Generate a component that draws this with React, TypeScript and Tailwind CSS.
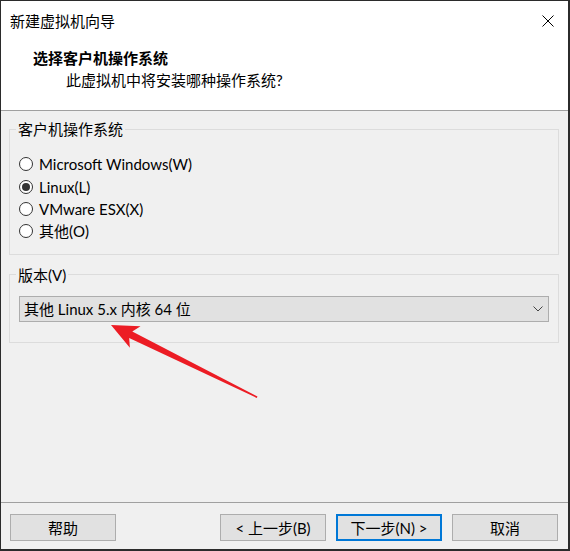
import React from 'react'

const font = "font-['Lato','Noto_Sans_CJK_SC',sans-serif]"

const osOptions = [
  { label: 'Microsoft Windows(W)', checked: false },
  { label: 'Linux(L)', checked: true },
  { label: 'VMware ESX(X)', checked: false },
  { label: '其他(O)', checked: false }
]

const Radio: React.FC<{ checked: boolean }> = ({ checked }) => (
  <span className="w-[14px] h-[14px] rounded-full border border-[#333333] bg-white flex items-center justify-center shrink-0">
    {checked && <span className="w-[8px] h-[8px] rounded-full bg-[#333333]" />}
  </span>
)

const Button: React.FC<{ label: string; primary?: boolean }> = ({ label, primary }) => (
  <div
    className={
      primary
        ? 'w-[106px] h-[27px] bg-[#e1e1e1] border-2 border-[#0078d7] flex items-center justify-center text-[15px] leading-[20px]'
        : 'w-[106px] h-[27px] bg-[#e1e1e1] border border-[#adadad] flex items-center justify-center text-[15px] leading-[20px]'
    }
  >
    {label}
  </div>
)

const App: React.FC = () => {
  return (
    <div className={`${font} relative w-[570px] h-[551px] bg-[#f0f0f0] text-black border-l border-t border-r-2 border-b-2 border-[#2b2b2b] flex flex-col`}>
      {/* title + header */}
      <div className="bg-white h-[109px] shrink-0">
        <div className="h-[39px] flex items-center justify-between pl-[9px] pr-[14px]">
          <span className="text-[15px] leading-[20px]">新建虚拟机向导</span>
          <svg width="12" height="12" viewBox="0 0 12 12">
            <path d="M0.5 0.5L11.5 11.5M11.5 0.5L0.5 11.5" stroke="#000" strokeWidth="1" />
          </svg>
        </div>
        <div className="pt-[7px] pl-[32px]">
          <div className="text-[15px] leading-[22px] font-bold">选择客户机操作系统</div>
          <div className="text-[15px] leading-[22px] pl-[33px]">此虚拟机中将安装哪种操作系统?</div>
        </div>
      </div>
      <div className="h-px bg-[#a0a0a0] shrink-0" />

      {/* body */}
      <div className="flex-1 px-[8px] pr-[9px]">
        <fieldset className="mt-[8px] border border-[#dcdcdc] pb-[10px]">
          <legend className="ml-[6px] px-[2px] text-[15px] leading-[20px]">客户机操作系统</legend>
          <div className="pt-[14px] pl-[9px] pb-[1px] flex flex-col">
            {osOptions.map((opt) => (
              <div key={opt.label} className="h-[22.4px] flex items-center gap-[6px]">
                <Radio checked={opt.checked} />
                <span className="text-[15px] leading-[20px]">{opt.label}</span>
              </div>
            ))}
          </div>
        </fieldset>

        <fieldset className="mt-[10px] border border-[#dcdcdc] pb-[20px]">
          <legend className="ml-[6px] px-[2px] text-[15px] leading-[20px]">版本(V)</legend>
          <div className="pt-[11px] px-[9px]">
            <div className="h-[26px] bg-[#e1e1e1] border border-[#adadad] flex items-center justify-between pl-[4px] pr-[5px]">
              <span className="text-[15px] leading-[20px]">其他 Linux 5.x 内核 64 位</span>
              <svg width="10" height="6" viewBox="0 0 10 6">
                <path d="M0.5 0.5L5 5L9.5 0.5" fill="none" stroke="#444" strokeWidth="1" />
              </svg>
            </div>
          </div>
        </fieldset>
      </div>

      {/* footer */}
      <div className="h-px bg-[#a0a0a0] shrink-0" />
      <div className="h-[46px] shrink-0 pt-[11px] pl-[9px] pr-[10px] flex justify-between">
        <Button label="帮助" />
        <div className="flex gap-[10px]">
          <Button label="< 上一步(B)" />
          <Button label="下一步(N) >" primary />
          <Button label="取消" />
        </div>
      </div>

      {/* red annotation arrow */}
      <svg className="absolute left-[-1px] top-[-1px] pointer-events-none" width="570" height="551" viewBox="0 0 570 551">
        <g transform="translate(111 325) rotate(26.3)">
          <polygon points="0,0 27,-12 22,-3.5 163,-0.8 163,0.8 22,3.5 27,12" fill="#ec1c24" />
        </g>
      </svg>
    </div>
  )
}

export default App
